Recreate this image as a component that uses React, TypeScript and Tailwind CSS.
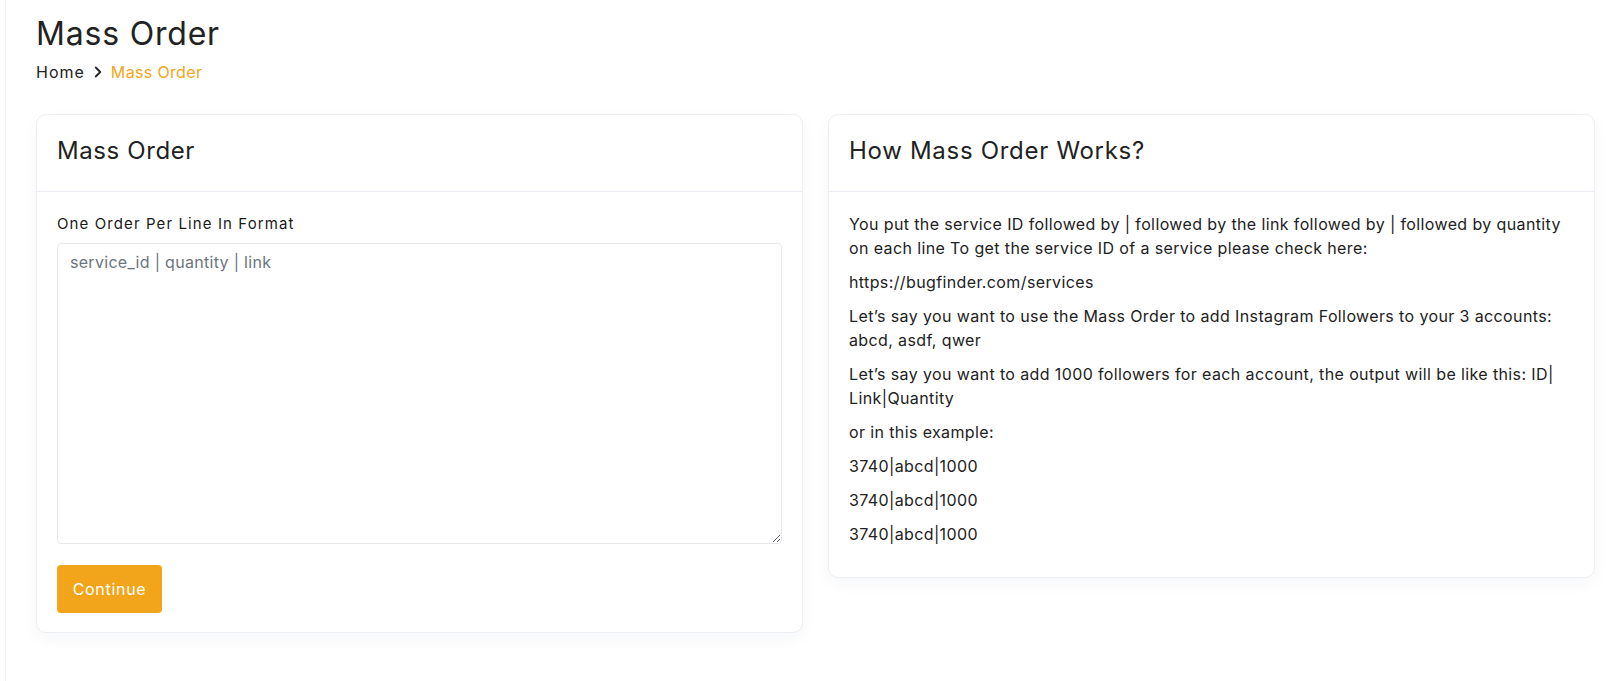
import React from "react";

function ChevronRight() {
  return (
    <svg width="18" height="18" viewBox="0 0 24 24" fill="none" stroke="#222" strokeWidth="2.4" strokeLinecap="round" strokeLinejoin="round">
      <path d="m9 6 6 6-6 6" />
    </svg>
  );
}

export default function App() {
  const paras = [
    "You put the service ID followed by | followed by the link followed by | followed by quantity on each line To get the service ID of a service please check here:",
    "https://bugfinder.com/services",
    "Let’s say you want to use the Mass Order to add Instagram Followers to your 3 accounts: abcd, asdf, qwer",
    "Let’s say you want to add 1000 followers for each account, the output will be like this: ID|\u200bLink|Quantity",
    "or in this example:",
    "3740|abcd|1000",
    "3740|abcd|1000",
    "3740|abcd|1000",
  ];
  return (
    <div className="min-h-[681px] bg-white text-[#212121] font-['Inter','Noto_Sans',sans-serif]">
      <div className="ml-[5px] min-h-[681px] border-l border-[#eef0f5] pl-[30px] pr-[15px] pt-[15px]">
        <h1 className="text-[32px] leading-[38px] font-normal tracking-[0.8px] text-[#222]">Mass Order</h1>
        <div className="mt-[7px] flex items-center gap-[4px] text-[16px] leading-[24px]">
          <span className="text-[#222] tracking-[1px]">Home</span>
          <ChevronRight />
          <span className="text-[#f2a51a] tracking-[0.35px]">Mass Order</span>
        </div>

        <div className="mt-[30px] grid grid-cols-[767px_767px] gap-[25px] items-start">
          <div className="rounded-[10px] border border-[#eceef5] bg-white shadow-[0_6px_16px_rgba(30,40,90,0.04)]">
            <div className="border-b border-[#eceef5] px-[20px] pt-[18px] pb-[22px]">
              <h2 className="text-[24px] leading-[36px] font-normal tracking-[0.6px] text-[#222]">Mass Order</h2>
            </div>
            <div className="px-[20px] pt-[20px] pb-[19px]">
              <label className="block text-[15px] leading-[23px] tracking-[1.1px] text-[#1a1a1a]">One Order Per Line In Format</label>
              <textarea
                className="mt-[8px] block h-[301px] w-full rounded-[4px] border border-[#e7e9ef] px-[12px] py-[6px] text-[16px] leading-[24px] tracking-[0.3px] outline-none placeholder:text-[#6c757d]"
                placeholder="service_id | quantity | link"
              />
              <button className="mt-[21px] h-[48px] w-[105px] rounded-[4px] bg-[#f2a51a] text-[16px] tracking-[0.7px] text-white">
                Continue
              </button>
            </div>
          </div>

          <div className="rounded-[10px] border border-[#eceef5] bg-white shadow-[0_6px_16px_rgba(30,40,90,0.04)]">
            <div className="border-b border-[#eceef5] px-[20px] pt-[18px] pb-[22px]">
              <h2 className="text-[24px] leading-[36px] font-normal tracking-[0.7px] text-[#222]">How Mass Order Works?</h2>
            </div>
            <div className="px-[20px] pt-[20px] pb-[21px] text-[16px] leading-[24px] tracking-[0.38px] text-[#222]">
              {paras.map((p, i) => (
                <p key={i} className="mb-[10px]">{p}</p>
              ))}
            </div>
          </div>
        </div>
      </div>
    </div>
  );
}
